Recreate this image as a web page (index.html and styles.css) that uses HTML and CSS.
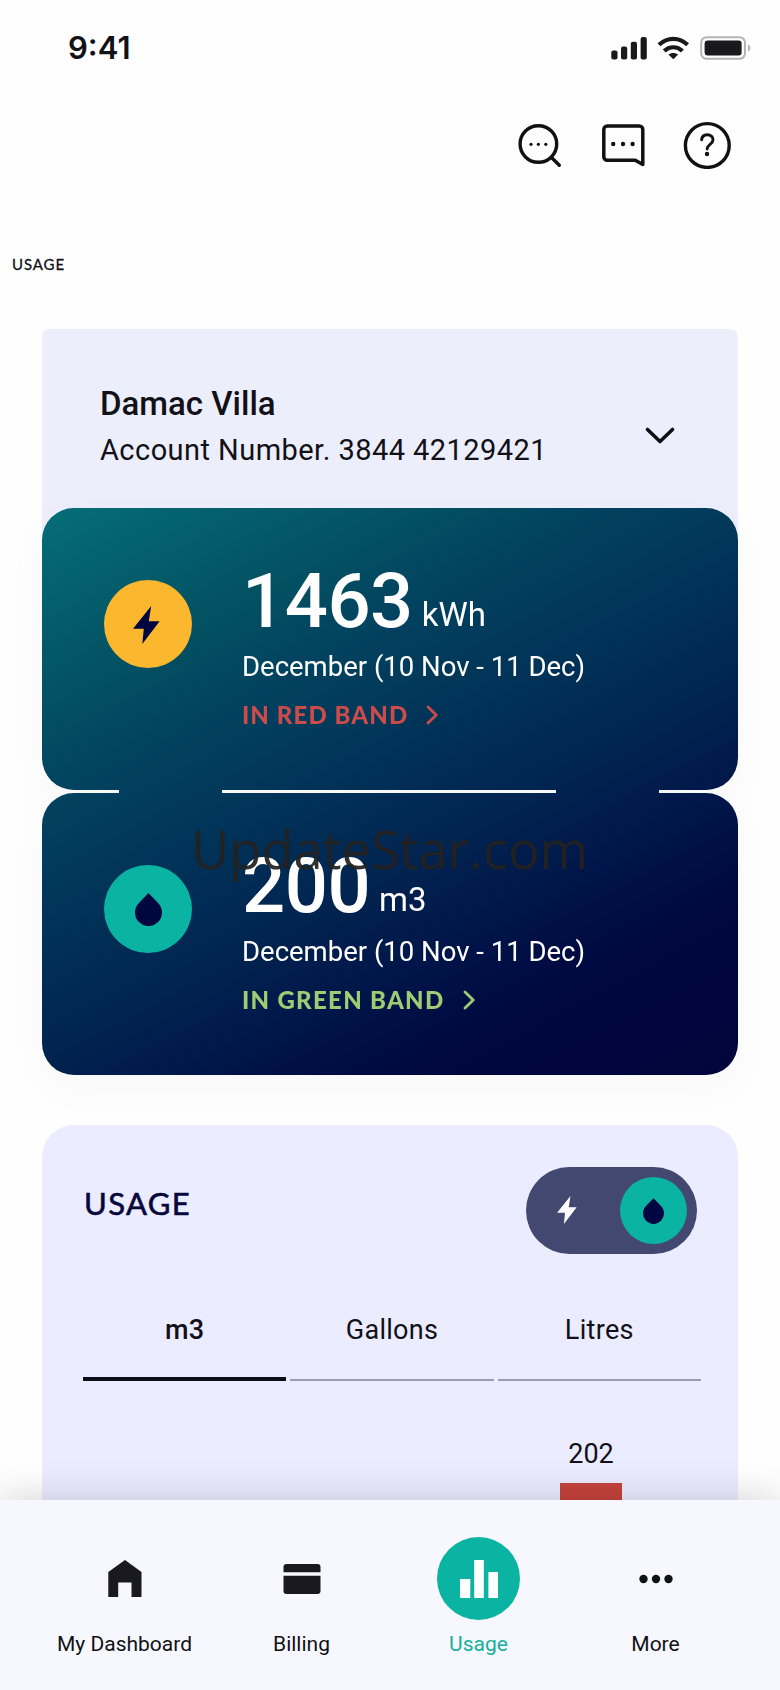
FILE: index.html
```html
<!DOCTYPE html>
<html lang="en">
<head>
<meta charset="utf-8">
<title>Usage</title>
<link rel="stylesheet" href="styles.css">
</head>
<body>
<svg class="defs" aria-hidden="true">
  <symbol id="bolt" viewBox="0 0 27 38"><path d="M18.200 0 0 22.800h10.800L9.300 38 26.600 15.200H15.800z"/></symbol>
  <symbol id="drop" viewBox="0 0 27 33"><path d="M13.5 0 22.800 9.800A13.500 13.500 0 1 1 4.200 9.800z"/></symbol>
  <symbol id="chevron" viewBox="0 0 12 20"><path d="M2 2l8.2 8L2 18" fill="none" stroke="currentColor" stroke-width="2.8" stroke-linecap="round" stroke-linejoin="round"/></symbol>
</svg>
<div class="screen">
  <main class="content">
    <div class="status">
      <span class="time">9:41</span>
      <svg width="90" height="24" viewBox="0 0 90 24">
        <g fill="#19191d">
          <rect x="1.300" y="14.500" width="6.200" height="9" rx="2"/>
          <rect x="11" y="10.500" width="6.200" height="13" rx="2"/>
          <rect x="20.800" y="5.800" width="6.200" height="17.700" rx="2"/>
          <rect x="30.600" y="1" width="6.200" height="22.500" rx="2"/>
          <path d="M63.300 23.200 58.400 18.600c2.800-2.300 7-2.300 9.800 0z"/>
        </g>
        <g fill="none" stroke="#19191d" stroke-width="4.200">
          <path d="M49 8.800C57.400.8 69.200.8 77.600 8.800"/>
          <path d="M54.200 15C59.400 10 67.200 10 72.400 15"/>
        </g>
      </svg>
      <svg width="52" height="24" viewBox="0 0 52 24">
        <rect x="1.200" y="1.200" width="43.800" height="21.600" rx="5.500" fill="none" stroke="#b4b4b6" stroke-width="2"/>
        <rect x="4.600" y="4.600" width="37" height="15" rx="3" fill="#19191d"/>
        <path d="M48 8.500c3.200 1.200 3.200 5.800 0 7z" fill="#b4b4b6"/>
      </svg>
    </div>

    <div class="actions">
      <svg width="48" height="48" viewBox="0 0 48 48">
        <circle cx="23.400" cy="23" r="18.300" fill="none" stroke="#111114" stroke-width="3.400"/>
        <path d="M37 37l7.300 7.300" stroke="#111114" stroke-width="3.400" stroke-linecap="round"/>
        <g fill="#111114"><circle cx="16" cy="23.300" r="1.600"/><circle cx="23.400" cy="23.300" r="1.600"/><circle cx="30.800" cy="23.300" r="1.600"/></g>
      </svg>
      <svg width="48" height="48" viewBox="0 0 48 48">
        <path d="M8.300 5h32a3.500 3.500 0 0 1 3.500 3.500v35.100l-7.500-4.300H8.300a3.500 3.500 0 0 1-3.500-3.500V8.500A3.500 3.500 0 0 1 8.300 5z" fill="none" stroke="#111114" stroke-width="3.500" stroke-linejoin="round"/>
        <g fill="#111114"><circle cx="14.200" cy="23" r="2.200"/><circle cx="24" cy="23" r="2.200"/><circle cx="33.600" cy="23" r="2.200"/></g>
      </svg>
      <svg width="48" height="48" viewBox="0 0 48 48">
        <circle cx="24.300" cy="24.500" r="21.900" fill="none" stroke="#111114" stroke-width="3.400"/>
        <path d="M18.600 18.800c.3-3.300 2.600-5.100 5.700-5.100 3.300 0 5.700 2.100 5.700 5 0 4.700-5.900 4.600-5.900 9.300" fill="none" stroke="#111114" stroke-width="2.900" stroke-linecap="round"/>
        <circle cx="24" cy="33" r="2.200" fill="#111114"/>
      </svg>
    </div>

    <h1 class="page-title">USAGE</h1>

    <section class="account">
      <div>
        <div class="account-name">Damac Villa</div>
        <div class="account-number">Account Number. 3844 42129421</div>
      </div>
      <svg class="account-arrow" width="32" height="20" viewBox="0 0 32 20"><path d="M3.500 3.500 16 15.500 28.500 3.500" fill="none" stroke="#111114" stroke-width="3.600" stroke-linecap="round" stroke-linejoin="round"/></svg>
    </section>

    <section class="meters">
      <div class="meter">
        <div class="badge badge-power"><svg width="27" height="38"><use href="#bolt"/></svg></div>
        <div class="reading">
          <div class="amount"><span class="value">1463</span><span class="unit">kWh</span></div>
          <div class="period">December (10 Nov - 11 Dec)</div>
          <div class="band band-red"><span>IN RED BAND</span><svg width="12" height="20"><use href="#chevron"/></svg></div>
        </div>
      </div>
      <div class="meter">
        <div class="badge badge-water"><svg width="27" height="33"><use href="#drop"/></svg></div>
        <div class="reading">
          <div class="amount"><span class="value">200</span><span class="unit">m3</span></div>
          <div class="period">December (10 Nov - 11 Dec)</div>
          <div class="band band-green"><span>IN GREEN BAND</span><svg width="12" height="20"><use href="#chevron"/></svg></div>
        </div>
      </div>
      <div class="watermark">UpdateStar.com</div>
    </section>

    <section class="usage">
      <div class="usage-head">
        <h2>USAGE</h2>
        <div class="toggle">
          <svg class="toggle-bolt" width="20" height="28"><use href="#bolt"/></svg>
          <div class="knob"><svg width="21" height="26"><use href="#drop"/></svg></div>
        </div>
      </div>
      <div class="tabs">
        <div class="tab active">m3</div>
        <div class="tab">Gallons</div>
        <div class="tab">Litres</div>
      </div>
      <div class="chart">
        <div class="column"><span>202</span><div class="bar"></div></div>
      </div>
    </section>
  </main>

  <nav class="nav">
    <div class="nav-item">
      <div class="nav-icon"><svg width="34" height="37" viewBox="0 0 34 37"><path d="M17 0 33.500 12V37H23.500V22.500H10.200V37H.300V12z" fill="#19191f"/></svg></div>
      <span>My Dashboard</span>
    </div>
    <div class="nav-item">
      <div class="nav-icon"><svg width="38" height="30" viewBox="0 0 38 30"><path d="M.500 8.300V3a3 3 0 0 1 3-3h31a3 3 0 0 1 3 3v5.300zM.500 11.700h37V27a3 3 0 0 1-3 3h-31a3 3 0 0 1-3-3z" fill="#19191f"/></svg></div>
      <span>Billing</span>
    </div>
    <div class="nav-item current">
      <div class="nav-icon"><svg width="38" height="38" viewBox="0 0 38 38"><path d="M0 19h10.300v19H0zM14.200 0h9.600v38h-9.600zM28.400 12h9.600v26h-9.600z" fill="#fff"/></svg></div>
      <span>Usage</span>
    </div>
    <div class="nav-item">
      <div class="nav-icon"><svg width="34" height="10" viewBox="0 0 34 10"><g fill="#111114"><circle cx="4.500" cy="5" r="4.200"/><circle cx="17" cy="5" r="4.200"/><circle cx="29.500" cy="5" r="4.200"/></g></svg></div>
      <span>More</span>
    </div>
  </nav>
</div>
</body>
</html>
```
FILE: styles.css
```css
* { box-sizing: border-box; }
body { margin: 0; background: #fff; font-family: Roboto, sans-serif; color: #111117; }
svg { display: block; flex: none; }
h1, h2 { margin: 0; }
.defs { position: absolute; width: 0; height: 0; }

.screen { display: flex; flex-direction: column; width: 780px; height: 1690px; overflow: hidden; background: #fefefe; }
.content { flex: 1; min-height: 0; overflow: hidden; }

.status { display: flex; align-items: center; height: 95px; padding: 0 28px 0 68px; }
.time { font: 600 31px/40px Inter, sans-serif; margin-right: auto; }

.actions { display: flex; justify-content: flex-end; align-items: center; gap: 36px; height: 98px; padding: 2px 49px 0 0; }
.page-title { margin: 61px 0 0 12px; font: 400 15px/20px Lato, sans-serif; letter-spacing: .9px; -webkit-text-stroke: .3px; }

.account { display: flex; justify-content: space-between; height: 211px; margin: 55px 42px 0; padding: 55px 62px 0 58px; border-radius: 8px 8px 0 0; background: #edeefb; }
.account-name { font-size: 33px; font-weight: 500; line-height: 40px; }
.account-number { margin-top: 6px; font-size: 29px; line-height: 40px; letter-spacing: .45px; }
.account-arrow { margin-top: 42px; }

.meters { position: relative; margin: -32px 42px 0; height: 567px; padding-bottom: 1px; filter: drop-shadow(0 14px 18px rgba(0, 0, 0, .025)); }
.meters::before {
  content: ""; position: absolute; inset: 0; z-index: -1;
  background: linear-gradient(152deg, #056e78 0%, #04606d 10%, #035062 22%, #024460 30%, #023a5b 39%, #012d55 50%, #01224f 60%, #001549 70%, #000b42 78%, #00073e 84%, #00063c 100%);
  clip-path: path("M32 0H664A32 32 0 0 1 696 32V250A32 32 0 0 1 664 282H617V285H664A32 32 0 0 1 696 317V535A32 32 0 0 1 664 567H32A32 32 0 0 1 0 535V317A32 32 0 0 1 32 285H77V282H32A32 32 0 0 1 0 250V32A32 32 0 0 1 32 0ZM180 282V285H514V282Z");
}
.meter { display: flex; height: 285px; padding: 72px 0 0 62px; color: #fff; }
.badge { display: flex; align-items: center; justify-content: center; width: 88px; height: 88px; border-radius: 50%; fill: #00063f; }
.badge-power { background: #fbb72e; }
.badge-power svg { margin: 2px 3px 0 0; }
.badge-water { background: #0bb3a3; }
.reading { margin: -18px 0 0 50px; }
.amount { display: flex; align-items: baseline; gap: 9px; height: 80px; line-height: 78px; }
.value { font-size: 76px; font-weight: 500; letter-spacing: -.5px; }
.unit { margin-bottom: 1px; font-size: 33px; line-height: 40px; transform: translateY(-1px); }
.period { margin-top: 8px; font-size: 27.500px; line-height: 34px; }
.band { display: flex; align-items: center; gap: 18px; margin-top: 14px; font: 900 24px/34px Lato, sans-serif; letter-spacing: 1.200px; }
.band-red { color: #cb4c49; letter-spacing: 1.100px; }
.band-green { color: #9dcc72; letter-spacing: 1.300px; }
.watermark { position: absolute; top: 304px; left: 149px; font: 400 52.500px/74px "Open Sans", sans-serif; color: rgba(35, 33, 32, .93); white-space: nowrap; }

.usage { height: 500px; margin: 50px 42px 0; padding: 42px 37px 0 41px; border-radius: 32px; background: #ebecff; }
.usage-head { display: flex; justify-content: space-between; padding-right: 4px; }
.usage-head h2 { margin: 16px 0 0 1px; font: 400 31px/40px Lato, sans-serif; color: #07073a; -webkit-text-stroke: .6px; letter-spacing: 1.400px; }
.toggle { display: flex; justify-content: space-between; align-items: center; width: 171px; height: 87px; padding: 0 10px 0 31px; border-radius: 44px; background: #42486f; }
.toggle-bolt { fill: #fff; margin-top: -2px; }
.knob { display: flex; align-items: center; justify-content: center; width: 67px; height: 67px; border-radius: 50%; background: #0bb3a3; fill: #00063f; }
.tabs { display: grid; grid-template-columns: repeat(3, 1fr); gap: 4px; margin-top: 44px; }
.tab { height: 83px; padding-top: 12px; border-bottom: 2px solid #9a9bb0; text-align: center; font-size: 27px; line-height: 40px; letter-spacing: .3px; }
.tab.active { border-bottom: 4px solid #0b0e17; font-weight: 500; }
.chart { display: flex; justify-content: flex-end; padding: 53px 79px 0 0; }
.column { width: 62px; text-align: center; font-size: 27px; line-height: 40px; }
.bar { height: 200px; margin-top: 9px; background: #c6433d; }

.nav { position: relative; display: grid; grid-template-columns: repeat(4, 177px); justify-content: center; height: 190px; padding-top: 37px; background: #f7f8ff; box-shadow: 0 -4px 34px rgba(0, 0, 0, .15); }
.nav-item { display: flex; flex-direction: column; align-items: center; font-size: 21px; line-height: 30px; color: #111114; }
.nav-icon { display: flex; align-items: center; justify-content: center; width: 83px; height: 83px; margin-bottom: 9px; border-radius: 50%; }
.current { color: #16af9c; }
.current .nav-icon { background: #0bb3a3; }
```
